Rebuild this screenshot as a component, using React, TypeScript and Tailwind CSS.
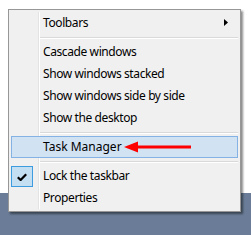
import React from "react";

const font = { fontFamily: '"Segoe UI", "Noto Sans", "Open Sans", sans-serif' };

function Item({ children, right }: { children: React.ReactNode; right?: React.ReactNode }) {
  return (
    <div className="relative h-[22px] flex items-center pl-[32px] text-[12px] tracking-[-0.4px] text-black leading-none">
      <span>{children}</span>
      {right}
    </div>
  );
}

function Sep() {
  return (
    <div className="h-[7px] flex items-center pl-[28px] pr-[0px]">
      <div className="h-[2px] w-full border-t border-t-[#d9d9d9] border-b border-b-white" />
    </div>
  );
}

export default function App() {
  return (
    <div className="relative w-[251px] h-[235px] overflow-hidden flex flex-col bg-white" style={font}>
      <div className="h-[193px] bg-white" />
      <div className="flex-1 bg-[#6a7c97]" />

      <div className="absolute left-[8px] top-[9px] w-[233px] border border-[#979797] bg-[#f0f0f0] p-[2px] shadow-[2px_2px_2px_rgba(0,0,0,0.45)]">
        <div className="absolute left-[29px] top-[2px] bottom-[2px] w-[2px] border-l border-l-[#e2e3e3] border-r border-r-white" />
        <Item
          right={
            <svg className="absolute right-[10px] top-[7px]" width="4" height="7" viewBox="0 0 4 7">
              <path d="M0 0 L4 3.5 L0 7 Z" fill="#000" />
            </svg>
          }
        >
          Toolbars
        </Item>
        <Sep />
        <Item>Cascade windows</Item>
        <Item>Show windows stacked</Item>
        <Item>Show windows side by side</Item>
        <Item>Show the desktop</Item>
        <Sep />
        <div className="relative h-[22px] flex items-center pl-[31px] text-[12px] tracking-[0px] text-black leading-none bg-[#d1e2f2] border border-[#84b2e5]">
          <span>Task Manager</span>
          <svg className="absolute left-[112px] top-[4px]" width="68" height="12" viewBox="0 0 68 12">
            <path d="M0 6 L14 0.5 L14 4.5 L67 4.5 L67 7.5 L14 7.5 L14 11.5 Z" fill="#ff0000" />
          </svg>
        </div>
        <Sep />
        <div className="relative h-[22px] flex items-center pl-[32px] text-[12px] tracking-[-0.4px] text-black leading-none">
          <div className="absolute left-0 top-[1px] w-[22px] h-[21px] bg-[#c5dff2] border border-[#3d9be0] flex items-center justify-center">
            <svg width="10" height="8" viewBox="0 0 10 8">
              <path d="M0.8 4.2 L3.6 7 L9.2 1.2" fill="none" stroke="#000" strokeWidth="2.2" />
            </svg>
          </div>
          <span>Lock the taskbar</span>
        </div>
        <Item>Properties</Item>
      </div>
    </div>
  );
}
